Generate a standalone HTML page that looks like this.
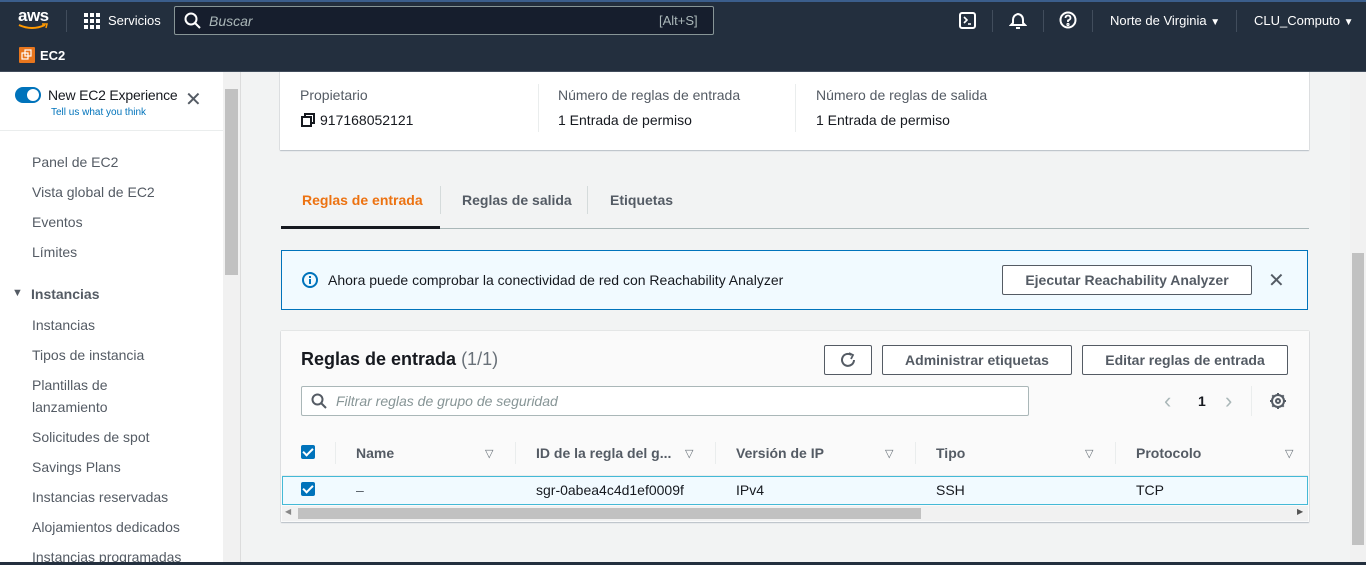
<!DOCTYPE html>
<html><head><meta charset="utf-8"><style>
*{box-sizing:border-box;margin:0;padding:0}
body{width:1366px;height:565px;overflow:hidden;position:relative;font-family:"Liberation Sans",sans-serif;background:#f2f3f3;color:#16191f;font-size:14px}
.a{position:absolute;white-space:nowrap}
.top{left:0;top:0;width:1366px;height:41px;background:#232f3e;border-top:2px solid #3b5e8c;z-index:5}
.sub{left:0;top:41px;width:1366px;height:31px;background:#232f3e;border-bottom:1px solid #414d5c;z-index:5}
.h{z-index:6}
.w{color:#fff}
.btn{position:absolute;border:1px solid #545b64;background:#fff;color:#545b64;font-weight:bold;font-size:14px;text-align:center;border-radius:2px}
.nav{color:#545b64;font-size:14px;left:32px}
.card{position:absolute;background:#fff;box-shadow:0 1px 1px rgba(0,31,63,.2),0 0 1px rgba(0,28,36,.3)}
.lbl{color:#545b64;font-size:14px}
.th{font-weight:bold;color:#545b64;font-size:14px}
.cb{position:absolute;width:14px;height:14px;background:#0073bb;border-radius:2px}
.cb:after{content:"";position:absolute;left:4px;top:1px;width:4px;height:8px;border:solid #fff;border-width:0 2px 2px 0;transform:rotate(45deg)}
.tri{color:#687078;font-size:11px}
</style></head><body>
<div class="a top"></div>
<div class="a sub"></div>
<div class="a w h" style="left:18px;top:6px;font-size:17px;font-weight:bold;letter-spacing:-.5px">aws</div>
<svg class="a h" style="left:18px;top:23px" width="32" height="8"><path d="M1 2 Q14 8 27 2" stroke="#ff9900" stroke-width="2" fill="none"/><path d="M24 1 L29 1 L28 5" stroke="#ff9900" stroke-width="1.5" fill="none"/></svg>
<div class="a h" style="left:66px;top:10px;width:1px;height:22px;background:#414d5c"></div>
<svg class="a h" style="left:84px;top:13px" width="17" height="17" fill="#fff"><rect x="0" y="0" width="4" height="4"/><rect x="6" y="0" width="4" height="4"/><rect x="12" y="0" width="4" height="4"/><rect x="0" y="6" width="4" height="4"/><rect x="6" y="6" width="4" height="4"/><rect x="12" y="6" width="4" height="4"/><rect x="0" y="12" width="4" height="4"/><rect x="6" y="12" width="4" height="4"/><rect x="12" y="12" width="4" height="4"/></svg>
<div class="a w h" style="left:108px;top:13px;font-size:13px">Servicios</div>
<div class="a h" style="left:174px;top:6px;width:540px;height:29px;background:#161e2d;border:1px solid #879596;border-radius:2px"></div>
<svg class="a h" style="left:184px;top:12px" width="18" height="18" stroke="#fff" stroke-width="2" fill="none"><circle cx="7" cy="7" r="5.5"/><path d="M11 11 L16 16"/></svg>
<div class="a h" style="left:209px;top:13px;color:#aab7b8;font-style:italic;font-size:14px">Buscar</div>
<div class="a h" style="left:659px;top:13px;color:#aab7b8;font-size:13px">[Alt+S]</div>
<svg class="a h" style="left:959px;top:12px" width="18" height="18" fill="none" stroke="#fff" stroke-width="2"><rect x="1" y="1" width="15" height="15" rx="2"/><path d="M5 5 L8 8 L5 11 M9 12 H12" stroke-width="1.6"/></svg>
<div class="a h" style="left:992px;top:10px;width:1px;height:22px;background:#414d5c"></div>
<svg class="a h" style="left:1009px;top:11px" width="18" height="20" fill="none" stroke="#fff" stroke-width="2"><path d="M9 3 Q4 4 4 9 V12 L2 14 H16 L14 12 V9 Q14 4 9 3Z"/><path d="M7 17 H11"/></svg>
<div class="a h" style="left:1043px;top:10px;width:1px;height:22px;background:#414d5c"></div>
<svg class="a h" style="left:1059px;top:11px" width="18" height="18" fill="none" stroke="#fff" stroke-width="2"><circle cx="9" cy="9" r="7.5"/><path d="M6.5 7 Q6.5 4.5 9 4.5 Q11.5 4.5 11.5 7 Q11.5 8.5 9 9.5 V11" stroke-width="1.8"/><circle cx="9" cy="13.5" r=".6"/></svg>
<div class="a h" style="left:1092px;top:10px;width:1px;height:22px;background:#414d5c"></div>
<div class="a w h" style="left:1110px;top:13px;font-size:13px">Norte de Virginia <span style="font-size:10px">▼</span></div>
<div class="a h" style="left:1236px;top:10px;width:1px;height:22px;background:#414d5c"></div>
<div class="a w h" style="left:1254px;top:13px;font-size:13px">CLU_Computo <span style="font-size:10px">▼</span></div>
<div class="a h" style="left:19px;top:47px;width:16px;height:16px;background:#e8761d;border-radius:1px"></div>
<svg class="a h" style="left:21px;top:49px" width="12" height="12" fill="none" stroke="#fff" stroke-width="1.2"><rect x="1" y="4" width="6" height="6"/><rect x="4" y="1" width="6" height="6"/></svg>
<div class="a w h" style="left:40px;top:48px;font-size:13px;font-weight:bold">EC2</div>

<!-- sidebar -->
<div class="a" style="left:0;top:72px;width:223px;height:493px;background:#fff"></div>
<div class="a" style="left:0;top:130px;width:223px;height:1px;background:#eaeded"></div>
<div class="a" style="left:15px;top:87px;width:26px;height:16px;background:#0073bb;border-radius:8px"></div>
<div class="a" style="left:27px;top:89px;width:12px;height:12px;background:#fff;border-radius:50%"></div>
<div class="a" style="left:48px;top:87px;font-size:14px;letter-spacing:-.2px">New EC2 Experience</div>
<div class="a" style="left:51px;top:107px;font-size:10px;color:#0073bb">Tell us what you think</div>
<div class="a" style="left:185px;top:90px;font-size:20px;color:#545b64;line-height:20px">✕</div>
<div class="a nav" style="top:154px">Panel de EC2</div>
<div class="a nav" style="top:184px">Vista global de EC2</div>
<div class="a nav" style="top:214px">Eventos</div>
<div class="a nav" style="top:244px">Límites</div>
<div class="a" style="left:12px;top:287px;font-size:11px;color:#545b64">▼</div>
<div class="a" style="left:31px;top:286px;font-weight:bold;color:#545b64">Instancias</div>
<div class="a nav" style="top:317px">Instancias</div>
<div class="a nav" style="top:347px">Tipos de instancia</div>
<div class="a nav" style="top:377px">Plantillas de</div>
<div class="a nav" style="top:399px">lanzamiento</div>
<div class="a nav" style="top:429px">Solicitudes de spot</div>
<div class="a nav" style="top:459px">Savings Plans</div>
<div class="a nav" style="top:489px">Instancias reservadas</div>
<div class="a nav" style="top:519px">Alojamientos dedicados</div>
<div class="a nav" style="top:549px">Instancias programadas</div>
<div class="a" style="left:223px;top:72px;width:17px;height:493px;background:#f1f1f1"></div>
<div class="a" style="left:225px;top:89px;width:13px;height:186px;background:#c1c1c1"></div>
<div class="a" style="left:240px;top:72px;width:1px;height:493px;background:#dcdcdc"></div>
<div class="a" style="left:1350px;top:72px;width:16px;height:493px;background:#f1f1f1"></div>
<div class="a" style="left:1352px;top:253px;width:12px;height:292px;background:#c1c1c1"></div>

<!-- top card -->
<div class="card" style="left:280px;top:60px;width:1029px;height:90px"></div>
<div class="a lbl" style="left:300px;top:87px">Propietario</div>
<svg class="a" style="left:301px;top:113px" width="14" height="14" fill="none" stroke="#16191f" stroke-width="2"><rect x="1" y="4" width="9" height="9"/><path d="M4 4 V1 H13 V10 H10"/></svg>
<div class="a" style="left:320px;top:112px">917168052121</div>
<div class="a" style="left:538px;top:84px;width:1px;height:48px;background:#eaeded"></div>
<div class="a lbl" style="left:558px;top:87px">Número de reglas de entrada</div>
<div class="a" style="left:558px;top:112px">1 Entrada de permiso</div>
<div class="a" style="left:795px;top:84px;width:1px;height:48px;background:#eaeded"></div>
<div class="a lbl" style="left:816px;top:87px">Número de reglas de salida</div>
<div class="a" style="left:816px;top:112px">1 Entrada de permiso</div>

<!-- tabs -->
<div class="a" style="left:281px;top:228px;width:1028px;height:1px;background:#aab7b8"></div>
<div class="a" style="left:281px;top:226px;width:159px;height:3px;background:#16191f"></div>
<div class="a" style="left:302px;top:192px;font-weight:bold;color:#ec7211">Reglas de entrada</div>
<div class="a" style="left:440px;top:186px;width:1px;height:28px;background:#d5dbdb"></div>
<div class="a" style="left:462px;top:192px;font-weight:bold;color:#545b64">Reglas de salida</div>
<div class="a" style="left:587px;top:186px;width:1px;height:28px;background:#d5dbdb"></div>
<div class="a" style="left:610px;top:192px;font-weight:bold;color:#545b64">Etiquetas</div>

<!-- info -->
<div class="a" style="left:281px;top:250px;width:1027px;height:60px;background:#f1faff;border:1px solid #0073bb"></div>
<svg class="a" style="left:302px;top:272px" width="16" height="16"><circle cx="8" cy="8" r="7" fill="none" stroke="#0073bb" stroke-width="2"/><rect x="7" y="7" width="2" height="5" fill="#0073bb"/><rect x="7" y="4" width="2" height="2" fill="#0073bb"/></svg>
<div class="a" style="left:328px;top:272px">Ahora puede comprobar la conectividad de red con Reachability Analyzer</div>
<div class="btn" style="left:1002px;top:265px;width:250px;height:30px;line-height:28px;color:#545b64">Ejecutar Reachability Analyzer</div>
<div class="a" style="left:1268px;top:268px;font-size:20px;color:#545b64">✕</div>

<!-- table card -->
<div class="card" style="left:281px;top:331px;width:1028px;height:191px;background:#fafafa"></div>
<div class="a" style="left:301px;top:349px;font-size:18px;font-weight:bold">Reglas de entrada <span style="font-weight:normal;color:#687078">(1/1)</span></div>
<div class="btn" style="left:824px;top:345px;width:48px;height:30px"></div>
<svg class="a" style="left:839px;top:351px" width="18" height="18" fill="none" stroke="#545b64" stroke-width="2"><path d="M15 9 A6 6 0 1 1 12.5 4"/><path d="M10 2 L14 4 L12 8" stroke-width="1.8"/></svg>
<div class="btn" style="left:882px;top:345px;width:190px;height:30px;line-height:28px">Administrar etiquetas</div>
<div class="btn" style="left:1082px;top:345px;width:206px;height:30px;line-height:28px">Editar reglas de entrada</div>
<div class="a" style="left:301px;top:386px;width:728px;height:30px;background:#fff;border:1px solid #aab7b8;border-radius:2px"></div>
<svg class="a" style="left:311px;top:393px" width="16" height="16" stroke="#545b64" stroke-width="2" fill="none"><circle cx="6.5" cy="6.5" r="5"/><path d="M10 10 L15 15"/></svg>
<div class="a" style="left:336px;top:393px;color:#879596;font-style:italic">Filtrar reglas de grupo de seguridad</div>
<div class="a" style="left:1164px;top:388px;font-size:22px;color:#aab7b8">‹</div>
<div class="a" style="left:1198px;top:393px;font-weight:bold">1</div>
<div class="a" style="left:1225px;top:388px;font-size:22px;color:#aab7b8">›</div>
<div class="a" style="left:1251px;top:386px;width:1px;height:30px;background:#eaeded"></div>
<svg class="a" style="left:1269px;top:392px" width="18" height="18" fill="none" stroke="#545b64" stroke-width="2"><circle cx="9" cy="9" r="6"/><circle cx="9" cy="9" r="2"/><path d="M9 1v2M9 15v2M1 9h2M15 9h2M3.3 3.3l1.4 1.4M13.3 13.3l1.4 1.4M3.3 14.7l1.4-1.4M13.3 4.7l1.4-1.4"/></svg>
<div class="a" style="left:282px;top:431px;width:1026px;height:45px;background:#fafafa;border-bottom:1px solid #eaeded"></div>
<div class="cb" style="left:301px;top:445px"></div>
<div class="a" style="left:335px;top:442px;width:1px;height:22px;background:#eaeded"></div>
<div class="a th" style="left:356px;top:445px">Name</div><div class="a tri" style="left:485px;top:447px">▽</div>
<div class="a" style="left:515px;top:442px;width:1px;height:22px;background:#eaeded"></div>
<div class="a th" style="left:536px;top:445px">ID de la regla del g...</div><div class="a tri" style="left:685px;top:447px">▽</div>
<div class="a" style="left:715px;top:442px;width:1px;height:22px;background:#eaeded"></div>
<div class="a th" style="left:736px;top:445px">Versión de IP</div><div class="a tri" style="left:885px;top:447px">▽</div>
<div class="a" style="left:915px;top:442px;width:1px;height:22px;background:#eaeded"></div>
<div class="a th" style="left:936px;top:445px">Tipo</div><div class="a tri" style="left:1085px;top:447px">▽</div>
<div class="a" style="left:1115px;top:442px;width:1px;height:22px;background:#eaeded"></div>
<div class="a th" style="left:1136px;top:445px">Protocolo</div><div class="a tri" style="left:1285px;top:447px">▽</div>
<div class="a" style="left:282px;top:476px;width:1026px;height:29px;background:#f1faff;border:1px solid #44b9d6"></div>
<div class="cb" style="left:301px;top:482px"></div>
<div class="a" style="left:356px;top:482px;color:#545b64">–</div>
<div class="a" style="left:536px;top:482px">sgr-0abea4c4d1ef0009f</div>
<div class="a" style="left:736px;top:482px">IPv4</div>
<div class="a" style="left:936px;top:482px">SSH</div>
<div class="a" style="left:1136px;top:482px">TCP</div>
<div class="a" style="left:282px;top:506px;width:1026px;height:15px;background:#f1f1f1"></div>
<div class="a" style="left:298px;top:508px;width:623px;height:11px;background:#c1c1c1"></div>
<div class="a" style="left:285px;top:507px;font-size:8px;color:#888">◀</div>
<div class="a" style="left:1297px;top:507px;font-size:8px;color:#555">▶</div>
<div class="a" style="left:0;top:562px;width:1366px;height:3px;background:#232f3e"></div>
</body></html>
